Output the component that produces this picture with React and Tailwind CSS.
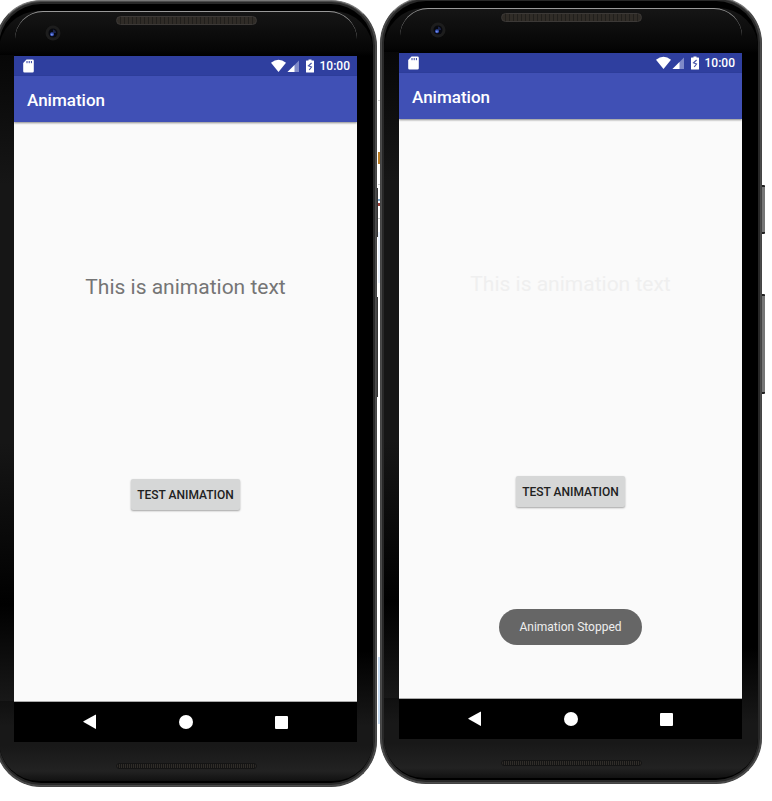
function StatusBar() {
  return (
    <div className="flex h-5 items-center bg-[#2f3f9f] pr-[7px] pl-2 text-white">
      <svg className="h-4 w-3" viewBox="0 0 12 16" aria-label="SD card" fill="none">
        <path d="M4.500 1.500H10.500a1.300 1.300 0 0 1 1.300 1.300v10.400a1.300 1.300 0 0 1-1.300 1.300H2.500a1.300 1.300 0 0 1-1.300-1.300V5z" fill="#fff" />
        <path d="M5 3v2.200M7.200 3v2.200M9.400 3v2.200" stroke="#2f3f9f" strokeWidth="1" />
      </svg>
      <svg className="ml-auto h-4 w-[29px]" viewBox="0 0 29 16" aria-label="Wi-Fi and mobile signal">
        <path d="M0 4.800Q7.500-1.400 15 4.800L7.500 14z" fill="#fff" />
        <path d="M28 2.500V14H16.500z" fill="#7f8ac8" />
        <path d="M23.500 7V14H16.500z" fill="#fff" />
      </svg>
      <svg className="ml-[6px] h-4 w-2" viewBox="0 0 8 16" aria-label="Battery charging">
        <path d="M2.500 1.500h3v1H7.500q.5 0 .5.5V14q0 .5-.5.5H.5Q0 14.500 0 14V3q0-.5.5-.5h2z" fill="#fff" />
        <path d="M5.600 5L2.500 7.800L5.500 9L3.200 12" fill="none" stroke="#4a57ab" strokeWidth="1.200" />
      </svg>
      <span className="ml-[6px] text-xs leading-5 font-medium">10:00</span>
    </div>
  );
}

function NavBar() {
  return (
    <nav className="flex h-10 justify-center bg-black text-white">
      <button type="button" aria-label="Back" className="grid w-24 place-items-center">
        <svg className="h-4 w-4" viewBox="0 0 16 16" fill="currentColor">
          <path d="M14 1v13.500q0 .6-.6.300L1.500 8.100q-.5-.4 0-.8L13.400 .7q.6-.3.6.3z" />
        </svg>
      </button>
      <button type="button" aria-label="Home" className="grid w-24 place-items-center">
        <span className="h-[14px] w-[14px] rounded-full bg-white" />
      </button>
      <button type="button" aria-label="Recent apps" className="grid w-24 place-items-center">
        <span className="h-[13px] w-[13px] rounded-[1px] bg-white" />
      </button>
    </nav>
  );
}

function Screen({ faded, toast }) {
  return (
    <div className="flex flex-col bg-[#fafafa]">
      <StatusBar />
      <header className="z-10 flex h-[46px] items-center bg-[#4050b5] px-[13px] pt-[2px] shadow-[0_1px_2px_rgba(0,0,0,0.45)]">
        <h1 className="text-[17px] leading-6 font-medium text-white">Animation</h1>
      </header>
      <main className="flex h-[580px] flex-col items-center border-b border-[#aaa] pt-[149px]">
        <p className={faded ? "text-[21px] leading-8 text-[#efefef]" : "text-[21px] leading-8 text-[#757575]"}>
          This is animation text
        </p>
        <button
          type="button"
          className="mt-[176px] h-[31px] rounded-[2px] bg-[#d6d7d7] px-[6px] text-xs font-medium text-[#212121] shadow-[0_1px_2px_rgba(0,0,0,0.35)]"
        >
          TEST ANIMATION
        </button>
        {toast && (
          <div role="status" className="mt-[102px] flex h-9 items-center rounded-full bg-[#666] px-5 text-xs text-[#eee]">
            {toast}
          </div>
        )}
      </main>
      <NavBar />
    </div>
  );
}

function Speaker({ bottom }) {
  return (
    <div
      className={
        bottom
          ? "mx-auto h-[6px] w-[141px] rounded-full border border-[#141414] bg-[repeating-linear-gradient(90deg,#302d29_0_1px,#151515_1px_2px)]"
          : "mx-auto h-[9px] w-[141px] rounded-full border border-[#3c3937] bg-[repeating-linear-gradient(90deg,#302c27_0_3px,#211f1c_3px_4px)]"
      }
    />
  );
}

function Camera() {
  return (
    <svg className="absolute top-[13px] left-[30px] h-4 w-4" viewBox="0 0 16 16" aria-hidden="true">
      <circle cx="8" cy="8" r="7.500" fill="#1d1d1d" />
      <circle cx="8" cy="8" r="4.500" fill="#07080e" />
      <path d="M8 4.500Q11 5 11 8L8 8z" fill="#1c2448" />
      <circle cx="7" cy="9.300" r="2" fill="#3651b4" />
      <circle cx="6.800" cy="9.600" r="0.900" fill="#7c93ea" />
    </svg>
  );
}

function Phone({ raised, children }) {
  const sideKey = raised
    ? "absolute left-full w-[3px] rounded-r-[1px] border-y-2 border-[#222] bg-[#777]"
    : "absolute left-full w-px bg-[#333]";
  return (
    <section className={raised ? "relative -mt-[3px] min-w-0" : "relative min-w-0"}>
      <div className="rounded-[46px] border border-[#444] border-t-[#777] bg-[#4b4b4b] p-px">
        <div className="rounded-[44px] bg-[#282828] p-[2px]">
          <div className="rounded-[42px] bg-black pt-[7px] pb-[2px]">
            <div className="relative rounded-t-[40px] rounded-b-[40px] bg-[linear-gradient(180deg,#161616_0,#050505_40px,#000_45px,#000_640px,#181818_715px,#181818_735px,#222_760px,#111_100%)]">
              <div className="absolute top-11 bottom-20 left-0 w-[15px] bg-[linear-gradient(180deg,#070707,#161616_20%,#161616_60%,#000_85%,#181818)]" />
              <div className="relative mx-4 h-[45px] rounded-t-[28px] border-t border-[#999] pt-1">
                <Camera />
                <Speaker />
              </div>
              <div className="relative pr-4 pl-[15px]">{children}</div>
              <div className="h-[39px] pt-[21px]">
                <Speaker bottom />
              </div>
            </div>
          </div>
        </div>
      </div>
      <div className={`${sideKey} top-[188px] h-[49px]`} />
      <div className={`${sideKey} top-[297px] h-[100px]`} />
    </section>
  );
}

function Gutter() {
  return (
    <div className="flex flex-col pl-px" aria-hidden="true">
      <div className="mt-[100px] h-px bg-[#ccc]" />
      <div className="mt-[51px] h-3 bg-[#b87a22]" />
      <div className="mt-5 h-px bg-[#ccc]" />
      <div className="mt-[14px] h-[2px] bg-[#7ba4c8]" />
      <div className="mt-[2px] h-[3px] bg-[#963c35]" />
      <div className="mt-3 h-px bg-[#ccc]" />
      <div className="mt-[13px] h-[51px] bg-[#e9f1fc]" />
      <div className="mt-[374px] h-[67px] bg-[#c8dcf2]" />
    </div>
  );
}

export default function App() {
  return (
    <div className="min-h-screen overflow-hidden bg-white font-[Roboto,sans-serif]">
      <div className="-ml-[5px] grid grid-cols-[1fr_3px_1fr] items-start pr-[10px]">
        <Phone>
          <Screen />
        </Phone>
        <Gutter />
        <Phone raised>
          <Screen faded toast="Animation Stopped" />
        </Phone>
      </div>
    </div>
  );
}
